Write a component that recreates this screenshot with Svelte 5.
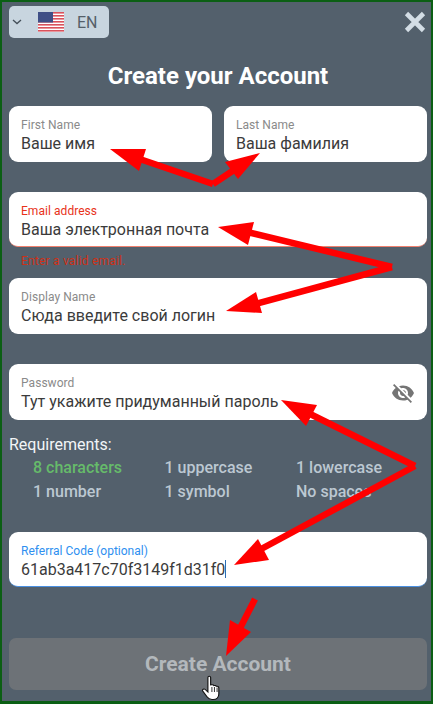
<script>
	const requirements = [
		{ text: '8 characters', met: true },
		{ text: '1 uppercase' },
		{ text: '1 lowercase' },
		{ text: '1 number' },
		{ text: '1 symbol' },
		{ text: 'No spaces' }
	];

	// red annotations drawn on top of the form: [shaft points, head points]
	const arrows = [
		['213,184 128,155', '110,149 146,149 139,171'],
		['213,184 243,164', '260,153 225,162 238,179'],
		['392,267 235,229', '218,227 254,222 248,245'],
		['392,267 244,307', '226,311 256,292 262,313'],
		['415,466 298,408', '281,400 317,405 306,426'],
		['415,466 252,554', '234,565 258,539 269,560'],
		['255,599 235,638', '226,656 230,620 251,632']
	];
</script>

<div class="screen">
	<header class="top">
		<div class="lang">
			<svg class="chevron" width="10" height="6" viewBox="0 0 10 6">
				<path d="M1 1l4 3.6L9 1" fill="none" stroke="#444f59" stroke-width="1.3" />
			</svg>
			<svg class="flag" width="26" height="20" viewBox="0 0 26 20">
				<rect width="26" height="20" fill="#fff" />
				{#each [0, 3, 6, 9, 12, 15, 18] as y}
					<rect {y} width="26" height="1.6" fill="#d9525c" />
				{/each}
				<rect width="15" height="10.5" fill="#3f4f86" />
			</svg>
			<span class="code">EN</span>
		</div>
		<svg class="close" width="22" height="22" viewBox="0 0 22 22">
			<path d="M2.5 2.5l17 17M19.5 2.5l-17 17" stroke="#d3dde5" stroke-width="4.6" />
		</svg>
	</header>

	<h1>Create your Account</h1>

	<div class="names">
		<div class="field">
			<span class="label">First Name</span>
			<span class="value">Ваше имя</span>
		</div>
		<div class="field">
			<span class="label">Last Name</span>
			<span class="value">Ваша фамилия</span>
		</div>
	</div>

	<div class="field email">
		<span class="label">Email address</span>
		<span class="value">Ваша электронная почта</span>
	</div>
	<p class="error">Enter a valid email.</p>

	<div class="field">
		<span class="label">Display Name</span>
		<span class="value">Сюда введите свой логин</span>
	</div>

	<div class="field password">
		<span class="label">Password</span>
		<span class="value">Тут укажите придуманный пароль</span>
		<svg class="eye" width="24" height="24" viewBox="0 0 24 24">
			<path
				fill="#757575"
				d="M12 7c2.76 0 5 2.24 5 5 0 .65-.13 1.26-.36 1.83l2.92 2.92c1.51-1.26 2.7-2.89 3.43-4.75-1.73-4.39-6-7.5-11-7.5-1.4 0-2.74.25-3.98.7l2.16 2.16C10.74 7.13 11.35 7 12 7zM2 4.27l2.28 2.28.46.46C3.08 8.3 1.78 10.02 1 12c1.73 4.39 6 7.5 11 7.5 1.55 0 3.03-.3 4.38-.84l.42.42L19.73 22 21 20.73 3.27 3 2 4.27zM7.53 9.8l1.55 1.55c-.05.21-.08.43-.08.65 0 1.66 1.34 3 3 3 .22 0 .44-.03.65-.08l1.55 1.55c-.67.33-1.41.53-2.2.53-2.76 0-5-2.24-5-5 0-.79.2-1.53.53-2.2zm4.31-.78l3.15 3.15.02-.16c0-1.66-1.34-3-3-3l-.17.01z"
			/>
		</svg>
	</div>

	<section class="reqs">
		<h2>Requirements:</h2>
		<ul>
			{#each requirements as req}
				<li class:met={req.met}>{req.text}</li>
			{/each}
		</ul>
	</section>

	<div class="field referral">
		<span class="label">Referral Code (optional)</span>
		<span class="value">61ab3a417c70f3149f1d31f0<i class="caret"></i></span>
	</div>

	<button class="submit" type="button">Create Account</button>

	<svg class="arrows" width="433" height="704" viewBox="0 0 433 704">
		{#each arrows as [shaft, head]}
			<polyline points={shaft} fill="none" stroke="#f00" stroke-width="6.5" />
			<polygon points={head} fill="#f00" />
		{/each}
	</svg>

	<svg class="cursor" width="20" height="26" viewBox="0 0 17.4 26" preserveAspectRatio="none">
		<path
			d="M6 2.5c0-1.6 2.4-1.6 2.4 0v7.5l1-.2c1-.2 1.6.2 1.8.8 1-.4 1.9 0 2.1.8 1.100-.4 2.200.2 2.200 1.500v6c0 3-1.800 5.600-5 5.600H9.500c-2 0-3.300-1-4.300-2.700L1.500 16c-.8-1.500 1-2.700 2.200-1.500L6 17z"
			fill="#fff"
			stroke="#111"
			stroke-width="1"
		/>
		<path d="M9.5 12v5M11.7 12v5M14 12.5V17" stroke="#111" stroke-width=".8" />
	</svg>
</div>

<style>
	:global(body) {
		margin: 0;
	}

	.screen {
		position: relative;
		box-sizing: border-box;
		width: 433px;
		height: 704px;
		padding: 4px 4px 0 7px;
		overflow: hidden;
		background: #53606c;
		border: 2px solid #0b5f14;
		border-bottom-width: 3px;
		font-family: Roboto, sans-serif;
	}

	.top {
		display: flex;
		justify-content: space-between;
		align-items: center;
		height: 32px;
	}

	.lang {
		display: flex;
		align-items: center;
		width: 100px;
		height: 32px;
		box-sizing: border-box;
		padding-left: 3px;
		background: #c8d5df;
		border-radius: 5px;
	}

	.chevron {
		margin-right: 16px;
	}

	.flag {
		margin-right: 13px;
	}

	.code {
		font-size: 16px;
		color: #555f69;
	}

	.close {
		margin-right: 1px;
	}

	h1 {
		margin: 23px 0 0;
		height: 30px;
		font-size: 24px;
		line-height: 30px;
		font-weight: 700;
		text-align: center;
		color: #fff;
	}

	.names {
		display: grid;
		grid-template-columns: 203px 203px;
		gap: 12px;
		margin-top: 15px;
	}

	.field {
		position: relative;
		box-sizing: border-box;
		display: flex;
		flex-direction: column;
		width: 418px;
		height: 56px;
		padding: 12px 12px 0;
		background: #fff;
		border-radius: 9px;
	}

	.names .field {
		width: 203px;
	}

	.label {
		font-size: 12px;
		line-height: 14px;
		letter-spacing: 0.05px;
		color: #8a8a8a;
	}

	.value {
		margin-top: 2px;
		font-size: 16px;
		line-height: 20px;
		color: #3b3b3b;
		white-space: nowrap;
	}

	.email {
		margin-top: 30px;
		height: 55px;
		border-bottom: 1px solid #f0806e;
	}

	.email .label {
		color: #e8321a;
	}

	.error {
		margin: 7px 12px 0;
		height: 24px;
		font-size: 12px;
		line-height: 14px;
		letter-spacing: 0.2px;
		color: #cf3016;
	}

	.password {
		margin-top: 30px;
	}

	.eye {
		position: absolute;
		top: 17px;
		right: 12px;
	}

	.reqs {
		margin-top: 15px;
	}

	h2 {
		margin: 0;
		font-size: 16px;
		line-height: 20px;
		font-weight: 400;
		color: #f2f5f7;
	}

	ul {
		display: grid;
		grid-template-columns: repeat(3, 131.5px);
		margin: 1px 0 0;
		padding: 0 0 0 24px;
		list-style: none;
	}

	li {
		font-size: 16px;
		line-height: 24px;
		font-weight: 500;
		color: #bcc8d2;
	}

	li.met {
		color: #66bb6a;
	}

	.referral {
		margin-top: 28px;
		height: 55px;
		border-bottom: 1px solid #4a90e2;
	}

	.referral .label {
		letter-spacing: 0;
		color: #2e8ff0;
	}

	.caret {
		display: inline-block;
		width: 1px;
		height: 18px;
		vertical-align: -3px;
		background: #2b6cb0;
	}

	.submit {
		display: block;
		width: 418px;
		height: 52px;
		margin-top: 51px;
		padding: 0;
		border: 0;
		border-radius: 7px;
		background: #6d7277;
		font-family: inherit;
		font-size: 21px;
		font-weight: 700;
		color: #b3b8bc;
	}

	.arrows {
		position: absolute;
		left: -2px;
		top: -2px;
		pointer-events: none;
	}

	.cursor {
		position: absolute;
		left: 199px;
		top: 673px;
	}
</style>
